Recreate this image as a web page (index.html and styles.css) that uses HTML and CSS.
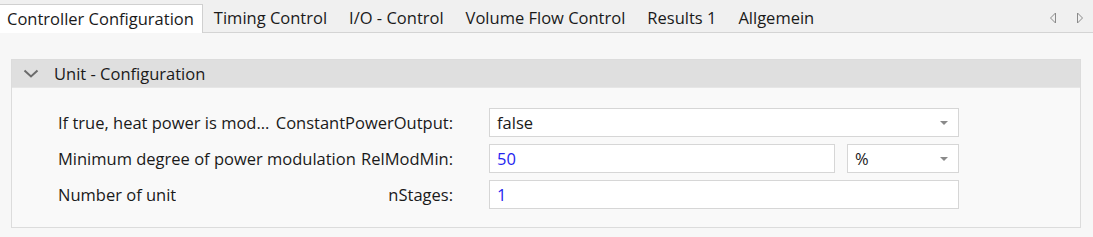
FILE: index.html
```html
<!DOCTYPE html>
<html lang="en">
<head>
  <meta charset="UTF-8">
  <title>Controller Configuration</title>
  <link rel="stylesheet" href="styles.css">
</head>
<body>
  <div class="tabs">
    <div class="tab active">Controller Configuration</div>
    <div class="tab">Timing Control</div>
    <div class="tab">I/O - Control</div>
    <div class="tab">Volume Flow Control</div>
    <div class="tab">Results 1</div>
    <div class="tab">Allgemein</div>
    <div class="tab-nav">
      <svg width="8" height="12" viewBox="0 0 8 12"><path d="M6.5 1 L1.5 6 L6.5 11 Z" fill="none" stroke="#8a8a8a" stroke-width="1"/></svg>
      <svg width="8" height="12" viewBox="0 0 8 12"><path d="M1.5 1 L6.5 6 L1.5 11 Z" fill="none" stroke="#8a8a8a" stroke-width="1"/></svg>
    </div>
  </div>

  <div class="panel">
    <div class="panel-head">
      <svg class="chevron" width="16" height="9" viewBox="0 0 16 9"><path d="M1.5 1.5 L8 7.5 L14.5 1.5" fill="none" stroke="#6b6b6b" stroke-width="2"/></svg>
      <span>Unit - Configuration</span>
    </div>
    <div class="panel-body">
      <div class="row">
        <div class="label">
          <span class="desc">If true, heat power is mod...</span>
          <span class="name">ConstantPowerOutput:</span>
        </div>
        <div class="fields">
          <div class="field select">false<i class="arrow"></i></div>
        </div>
      </div>
      <div class="row">
        <div class="label">
          <span class="desc">Minimum degree of power modulation</span>
          <span class="name">RelModMin:</span>
        </div>
        <div class="fields">
          <div class="field value">50</div>
          <div class="field select unit">%<i class="arrow"></i></div>
        </div>
      </div>
      <div class="row">
        <div class="label">
          <span class="desc">Number of unit</span>
          <span class="name">nStages:</span>
        </div>
        <div class="fields">
          <div class="field value">1</div>
        </div>
      </div>
    </div>
  </div>
</body>
</html>
```

FILE: styles.css
```css
body {
  margin: 0;
  background: #f7f7f7;
  font-family: "Open Sans", "Noto Sans", sans-serif;
  font-size: 16.5px;
  color: #1a1a1a;
}
.tabs {
  display: flex;
  align-items: flex-end;
  height: 28px;
  padding-top: 4px;
  background: #f0f0f0;
  border-bottom: 1px solid #d4d4d4;
}
.tab {
  height: 28px;
  line-height: 27px;
  padding: 0 11px;
  box-sizing: border-box;
  white-space: nowrap;
}
.tab.active {
  height: 29px;
  margin-bottom: -1px;
  background: #fff;
  border: 1px solid #d0d0d0;
  border-left: none;
  border-bottom: none;
  padding: 0 8px 0 7px;
}
.tab-nav {
  margin-left: auto;
  display: flex;
  gap: 19px;
  padding-right: 9px;
  height: 28px;
  align-items: center;
}
.panel {
  margin: 26px 12px 0 11px;
  border: 1px solid #dcdcdc;
  background: #f9f9f9;
}
.panel-head {
  display: flex;
  align-items: center;
  height: 27px;
  background: #dfdfdf;
  border-bottom: 1px solid #e6e6e6;
}
.chevron {
  margin: 0 15px 0 11px;
}
.panel-body {
  padding: 20px 0 18px 46px;
  display: flex;
  flex-direction: column;
  gap: 7px;
}
.row {
  display: flex;
  align-items: center;
}
.label {
  width: 395px;
  display: flex;
  white-space: nowrap;
}
.desc {
  overflow: hidden;
}
.name {
  flex: none;
  margin-left: auto;
}
.fields {
  display: flex;
  margin-left: 36px;
  width: 470px;
  gap: 12px;
}
.field {
  flex: 1;
  height: 29px;
  line-height: 27px;
  box-sizing: border-box;
  padding-left: 7px;
  background: #fff;
  border: 1px solid #d6d6d6;
  position: relative;
}
.value {
  color: #2424f0;
}
.unit {
  flex: none;
  width: 112px;
}
.arrow {
  position: absolute;
  right: 10px;
  top: 12px;
  border-left: 4px solid transparent;
  border-right: 4px solid transparent;
  border-top: 4px solid #8a8a8a;
}
```
